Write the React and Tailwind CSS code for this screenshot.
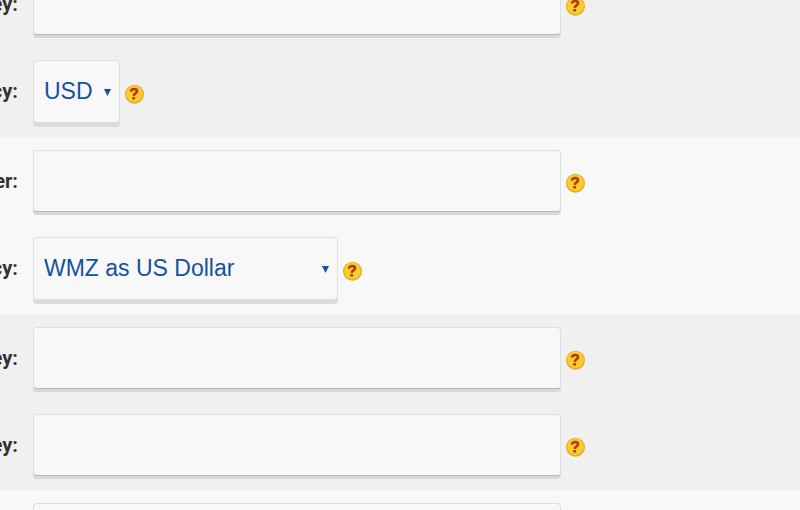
import React from 'react';

const sections = [
  [
    { id: 'card-key', label: 'Key:', type: 'text' },
    { id: 'card-currency', label: 'Currency:', type: 'select', options: ['USD', 'EUR'], width: 'w-[87px]' },
  ],
  [
    { id: 'purse-number', label: 'Number:', type: 'text' },
    {
      id: 'purse-currency',
      label: 'Currency:',
      type: 'select',
      options: ['WMZ as US Dollar', 'WME as Euro'],
      width: 'w-[305px]',
    },
  ],
  [
    { id: 'public-key', label: 'Key:', type: 'text' },
    { id: 'secret-key', label: 'Key:', type: 'text' },
  ],
  [{ id: 'account', label: 'Number:', type: 'text' }],
];

function HelpButton() {
  return (
    <button type="button" aria-label="Help" className="ml-[5px] mt-1 shrink-0">
      <svg width="20" height="20" viewBox="0 0 20 20" className="block">
        <circle cx="9.5" cy="10.2" r="9.5" fill="#dfae2c" />
        <circle cx="9.5" cy="9.9" r="8.3" fill="#fccb2c" />
        <path
          d="M6 7.6C6.2 5.7 7.5 5 9.2 5C11 5 12.1 5.9 12 7.3C11.9 9.3 9.1 9.3 8.8 11.8"
          fill="none"
          stroke="#b03c16"
          strokeWidth="2.6"
        />
        <rect x="7.3" y="13" width="2.8" height="2.5" fill="#b03c16" />
      </svg>
    </button>
  );
}

function SelectField({ field }) {
  return (
    <div className={`relative ${field.width}`}>
      <select
        id={field.id}
        className="block h-[63px] w-full appearance-none rounded border border-[#dedede] bg-[#f8f8f8] pl-[10px] font-['Liberation_Sans',Arial,sans-serif] text-[23px] text-[#1650a2] shadow-[0_4px_0_#dcdcdc] outline-none"
      >
        {field.options.map((option) => (
          <option key={option}>{option}</option>
        ))}
      </select>
      <svg
        width="7"
        height="7"
        viewBox="0 0 7 7"
        className="pointer-events-none absolute right-[9px] top-[29px]"
        aria-hidden="true"
      >
        <path d="M0 0H7L3.5 7Z" fill="#0d52a8" />
      </svg>
    </div>
  );
}

function Field({ field }) {
  return (
    <div className="flex items-center">
      <label
        htmlFor={field.id}
        className="flex w-[33px] shrink-0 justify-end pr-[15px] pb-[1px] text-[20px] leading-6 font-bold whitespace-nowrap text-[#333]"
      >
        {field.label}
      </label>
      {field.type === 'select' ? (
        <SelectField field={field} />
      ) : (
        <input
          id={field.id}
          type="text"
          className="h-[62px] w-full max-w-[528px] rounded border border-[#dedede] border-b-[#b9b9b9] bg-[#f8f8f8] px-[10px] font-['Liberation_Sans',Arial,sans-serif] text-[23px] text-[#1650a2] shadow-[0_3px_0_#d8d8d8] outline-none"
        />
      )}
      <HelpButton />
    </div>
  );
}

export default function App() {
  return (
    <div className="h-screen overflow-hidden bg-[#f8f8f8] font-[Roboto,sans-serif]">
      <form className="-mt-[39px]">
        {sections.map((fields, i) => (
          <fieldset key={i} className="flex flex-col gap-[25px] pt-3 pb-[15px] odd:bg-[#f0f0f0] even:bg-[#f8f8f8]">
            {fields.map((field) => (
              <Field key={field.id} field={field} />
            ))}
          </fieldset>
        ))}
      </form>
    </div>
  );
}
